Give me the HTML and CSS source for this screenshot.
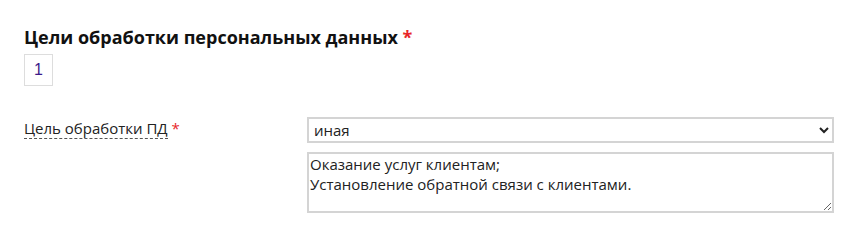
FILE: index.html
```html
<!DOCTYPE html>
<html lang="ru">
<head>
<meta charset="utf-8">
<title>Цели обработки</title>
<link rel="stylesheet" href="styles.css">
</head>
<body>
<section class="section">
  <h2 class="section-title">Цели обработки персональных данных <span class="req">*</span></h2>
  <div class="tabs"><a class="tab">1</a></div>
  <div class="field">
    <div class="field-label"><span class="label-text">Цель обработки ПД</span> <span class="req">*</span></div>
    <div class="field-controls">
      <select class="select">
        <option>иная</option>
      </select>
      <textarea class="textarea">Оказание услуг клиентам;
Установление обратной связи с клиентами.</textarea>
    </div>
  </div>
</section>
</body>
</html>
```

FILE: styles.css
```css
html, body {
  margin: 0;
  padding: 0;
  background: #fff;
}
body {
  font-family: "Open Sans", "Liberation Sans", sans-serif;
  color: #222;
}
.section {
  padding: 25px 20px 0 24px;
}
.section-title {
  margin: 0;
  font-size: 18px;
  font-weight: 700;
  line-height: 24px;
  color: #111;
}
.req {
  color: #e8262a;
}
.tabs {
  display: flex;
  margin-top: 5px;
}
.tab {
  box-sizing: border-box;
  width: 29px;
  height: 32px;
  border: 1px solid #ddd;
  display: flex;
  align-items: center;
  justify-content: center;
  font-family: "Liberation Sans", Arial, sans-serif;
  font-size: 16px;
  color: #3c1a8a;
}
.field {
  display: flex;
  margin-top: 31px;
}
.field-label {
  width: 283px;
  flex: none;
  font-size: 15px;
  line-height: 20px;
  padding-top: 1px;
  color: #222;
}
.label-text {
  border-bottom: 1px dashed #555;
}
.field-controls {
  flex: 1;
  display: flex;
  flex-direction: column;
  gap: 9px;
}
.select {
  box-sizing: border-box;
  width: 100%;
  height: 26px;
  border: 2px solid #d4d4d4;
  border-radius: 0;
  background: #fff;
  font-family: "Open Sans", sans-serif;
  font-size: 15px;
  color: #222;
  padding: 0 0 0 1px;
}
.textarea {
  box-sizing: border-box;
  width: 100%;
  height: 61px;
  border: 2px solid #d4d4d4;
  border-radius: 0;
  font-family: "Open Sans", sans-serif;
  font-size: 15px;
  line-height: 20px;
  color: #222;
  padding: 0 1px;
  margin: 0;
}
```
